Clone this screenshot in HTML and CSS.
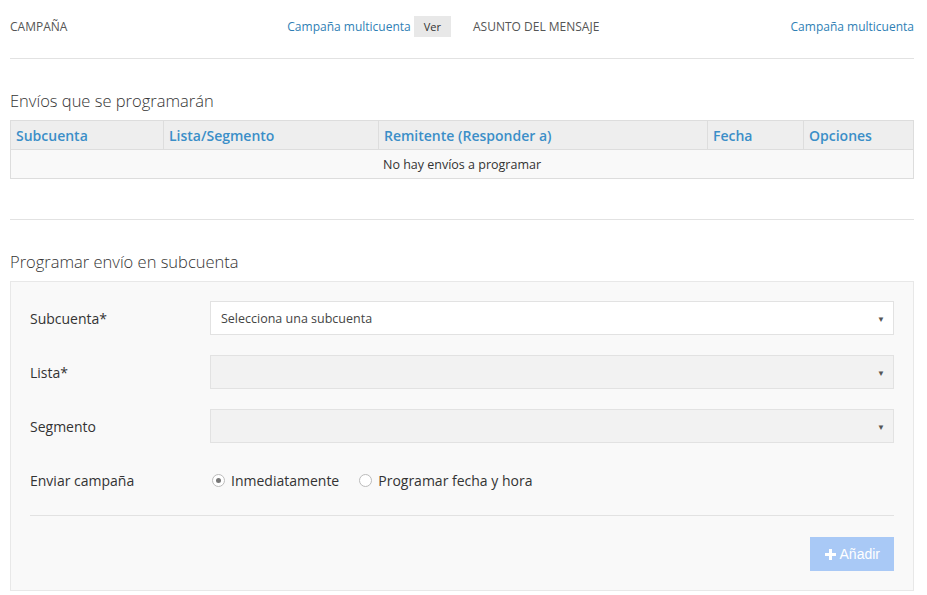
FILE: index.html
```html
<!DOCTYPE html>
<html lang="es">
<head>
  <meta charset="UTF-8">
  <meta name="viewport" content="width=device-width, initial-scale=1.0">
  <title>Campaña multicuenta</title>
  <link rel="stylesheet" href="styles.css">
</head>
<body>
  <div class="page">
    <div class="summary">
      <div class="summary-item">
        <span class="summary-label">CAMPAÑA</span>
        <span class="summary-value"><a href="#">Campaña multicuenta</a><button class="btn-ver">Ver</button></span>
      </div>
      <div class="summary-item">
        <span class="summary-label">ASUNTO DEL MENSAJE</span>
        <span class="summary-value"><a href="#">Campaña multicuenta</a></span>
      </div>
    </div>

    <h2 class="section-title">Envíos que se programarán</h2>
    <table class="shipments">
      <thead>
        <tr>
          <th class="col-sub">Subcuenta</th>
          <th class="col-list">Lista/Segmento</th>
          <th class="col-from">Remitente (Responder a)</th>
          <th class="col-date">Fecha</th>
          <th>Opciones</th>
        </tr>
      </thead>
      <tbody>
        <tr><td colspan="5" class="empty">No hay envíos a programar</td></tr>
      </tbody>
    </table>

    <hr class="divider">

    <h2 class="section-title">Programar envío en subcuenta</h2>
    <div class="panel">
      <div class="form-row">
        <label class="form-label">Subcuenta*</label>
        <div class="select"><span>Selecciona una subcuenta</span><span class="caret">▼</span></div>
      </div>
      <div class="form-row">
        <label class="form-label">Lista*</label>
        <div class="select disabled"><span></span><span class="caret">▼</span></div>
      </div>
      <div class="form-row">
        <label class="form-label">Segmento</label>
        <div class="select disabled"><span></span><span class="caret">▼</span></div>
      </div>
      <div class="form-row">
        <label class="form-label">Enviar campaña</label>
        <div class="radios">
          <label class="radio"><input type="radio" name="when" checked> Inmediatamente</label>
          <label class="radio"><input type="radio" name="when"> Programar fecha y hora</label>
        </div>
      </div>
      <div class="panel-footer">
        <button class="btn-add" disabled>
          <svg width="11" height="11" viewBox="0 0 11 11"><path d="M4 0h3v4h4v3H7v4H4V7H0V4h4z" fill="#fff"/></svg>
          Añadir
        </button>
      </div>
    </div>
  </div>
</body>
</html>
```

FILE: styles.css
```css
* { box-sizing: border-box; margin: 0; padding: 0; }
body { font-family: "Open Sans", Arial, sans-serif; background-color: #fff; color: #333; }
a { color: #2f7fb5; text-decoration: none; }
.page { padding: 0 13px 0 10px; }

.summary { display: grid; grid-template-columns: 1fr 1fr; column-gap: 22px; padding: 16px 0 21px; border-bottom: 1px solid #e2e2e2; }
.summary-item { display: flex; justify-content: space-between; align-items: center; height: 21px; font-size: 12px; }
.summary-label { color: #555; }
.summary-value { display: flex; align-items: center; }
.btn-ver { font-family: "Open Sans", Arial, sans-serif; font-size: 11px; color: #333; background-color: #e8e8e8; border: none; height: 21px; padding: 0 10px; margin-left: 3px; }

.section-title { font-size: 16.5px; font-weight: 300; color: #333; margin: 30px 0 8px; }

.shipments { width: 100%; border-collapse: collapse; border: 1px solid #ddd; font-size: 13px; }
.shipments th { background-color: #eee; color: #3b8ec8; font-weight: 600; text-align: left; height: 29px; padding: 0 5px; border-right: 1px solid #ddd; border-bottom: 1px solid #ddd; font-size: 14px; }
.shipments th:last-child { border-right: none; }
.col-sub { width: 153px; }
.col-list { width: 215px; }
.col-from { width: 329px; }
.col-date { width: 96px; }
.shipments td { background-color: #f9f9f9; height: 29px; }
.empty { text-align: center; color: #333; font-size: 12.5px; }

.divider { border: none; border-top: 1px solid #e2e2e2; margin-top: 40px; }
.divider + .section-title { margin-top: 30px; }

.panel { background-color: #f9f9f9; border: 1px solid #e8e8e8; padding: 19px 19px 19px; }
.form-row { display: flex; align-items: center; margin-bottom: 20px; }
.form-label { width: 180px; flex-shrink: 0; font-size: 14px; color: #333; }
.select { flex: 1; display: flex; justify-content: space-between; align-items: center; height: 34px; padding: 0 8px 0 10px; background-color: #fff; border: 1px solid #e2e2e2; font-size: 12.5px; color: #444; }
.select.disabled { background-color: #f2f2f2; }
.caret { font-size: 8px; color: #555; }

.radios { display: flex; align-items: center; height: 34px; font-size: 14px; }
.radio { display: flex; align-items: center; margin-right: 18px; color: #333; }
.radio input { appearance: none; width: 13px; height: 13px; border: 1px solid #bbb; border-radius: 50%; background-color: #fff; margin: 0 6px 0 2px; position: relative; }
.radio input:checked::after { content: ""; position: absolute; top: 3px; left: 3px; width: 5px; height: 5px; border-radius: 50%; background-color: #777; }

.panel-footer { border-top: 1px solid #e2e2e2; margin-top: -2px; padding-top: 21px; display: flex; justify-content: flex-end; }
.btn-add { display: flex; align-items: center; gap: 4px; background-color: #a9c9f6; color: #fff; border: none; height: 34px; padding: 0 14px 0 15px; font-family: "Liberation Sans", Arial, sans-serif; font-size: 14px; }
```
